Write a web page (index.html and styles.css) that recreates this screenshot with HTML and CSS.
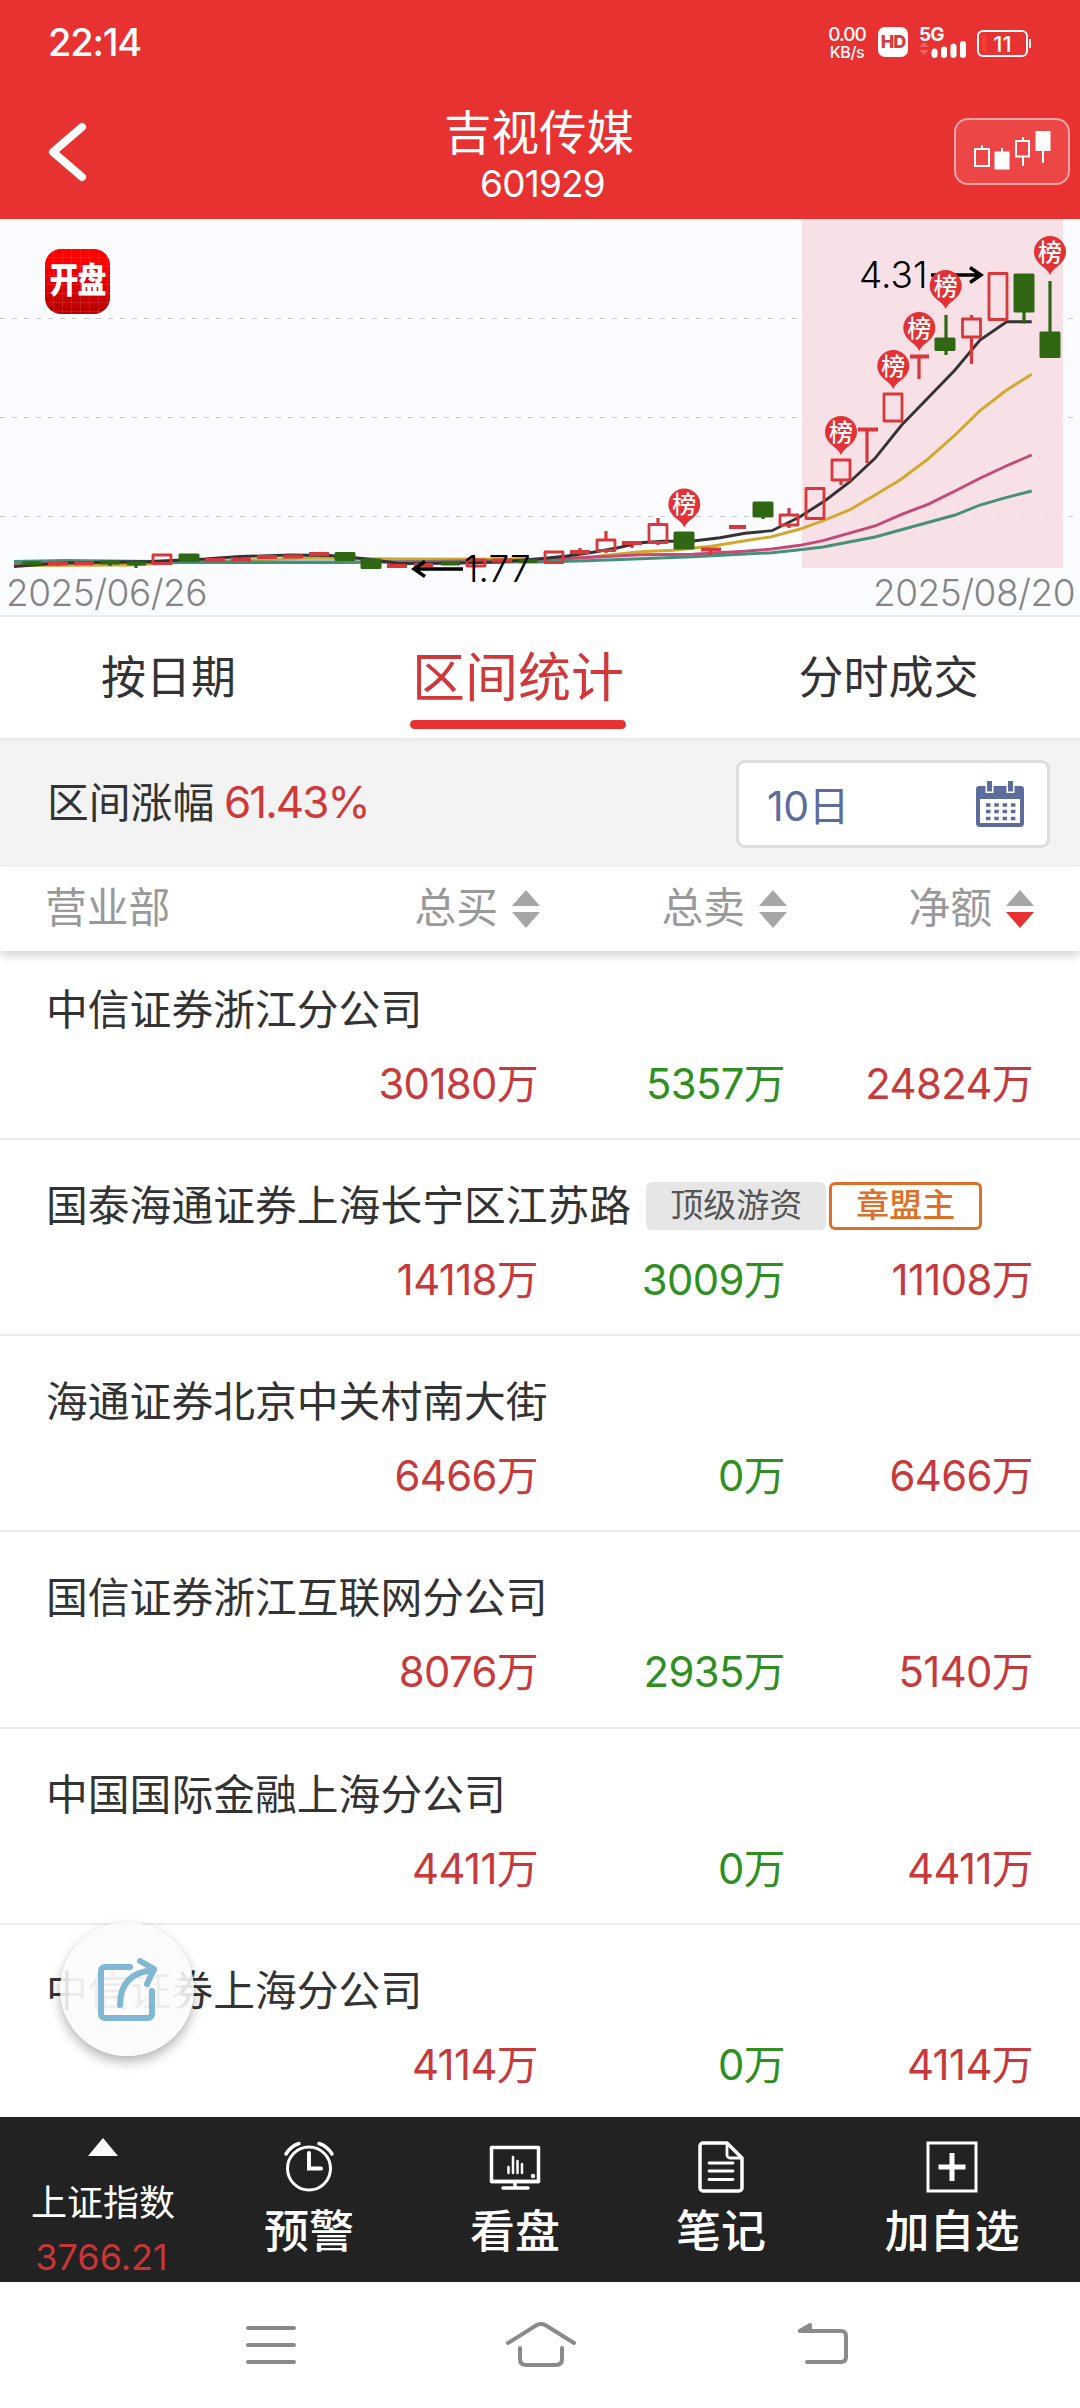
FILE: index.html
```html
<!DOCTYPE html>
<html lang="zh-CN">
<head>
  <meta charset="UTF-8">
  <meta name="viewport" content="width=device-width, initial-scale=1.0">
  <title>吉视传媒 601929</title>
  <link rel="stylesheet" href="styles.css">
</head>
<body>
  <div class="app">
    <header class="header">
      <div class="status-bar">
        <span class="clock">22:14</span>
        <div class="status-right">
          <div class="speed"><span>0.00</span><span>KB/s</span></div>
          <div class="hd">HD</div>
          <div class="signal">
            <span class="net">5G</span>
            <svg width="48" height="17" viewBox="0 0 48 17">
              <path d="M0 6l5-5 5 5zM0 9h10l-5 5z" fill="#f06060"/>
              <path d="M15.500 10.500v3.500M25 8.500v5.500M34.500 5.500v8.500M44 3v11" stroke="#fff" stroke-width="6" stroke-linecap="round"/>
            </svg>
          </div>
          <div class="battery"><span>11</span></div>
        </div>
      </div>
      <div class="title-bar">
        <svg class="back" width="44" height="62" viewBox="0 0 44 62">
          <path d="M37 6L8 31l29 25" fill="none" stroke="#fff" stroke-width="8" stroke-linecap="round" stroke-linejoin="round"/>
        </svg>
        <div class="title">
          <h1>吉视传媒</h1>
          <p>601929</p>
        </div>
        <div class="kline-btn">
          <svg width="80" height="46" viewBox="0 0 80 46">
            <g fill="none" stroke="#fff" stroke-width="2">
              <path d="M9 16v4M2 20h14v17H2zM50 8v4M43 12h13v15.500H43zM50 27.500V37M29 19v4M70 20v14"/>
              <path d="M22.500 23.500h13v16h-13zM63.500 3h13v18h-13z" fill="#fff"/>
            </g>
          </svg>
        </div>
      </div>
    </header>

    <section class="chart">
      <svg class="kline" width="1080" height="397" viewBox="0 219 1080 397">
        <defs>
          <symbol id="pin" viewBox="0 0 34 42" overflow="visible">
            <path d="M17 1a16 16 0 0 1 16 16c0 6-4 11-8.500 14.500C21 34 19 36 17 40c-2-4-4-6-7.500-8.500C5 28 1 23 1 17A16 16 0 0 1 17 1z" fill="#e23236"/>
            <text x="17" y="25.500" class="pin-text">榜</text>
          </symbol>
        </defs>
        <path class="grid" d="M0 318.500h1080M0 417.500h1080M0 516.500h1080"/>
        <rect x="802" y="219" width="261" height="349" fill="#f6dce2" fill-opacity=".88"/>

        <!-- MA5 / MA10 / MA20 / MA30 -->
        <polyline class="ma ma10" points="14,565.5 130,565 190,562 250,560 310,558 350,558.5 400,559 540,559.3 593,556.7 640,551.7 673,550.3 713,546 745,540.7 772,536.7 800,529 825,520 850,509.7 875,495 900,480 926.7,460 955,435 980,410.7 1006.7,390 1031.7,374.3"/>
        <polyline class="ma ma20" points="14,563 130,562.5 340,562.5 540,560 640,554.7 693,554.3 745,551.3 772,549 800,545.3 823,540.7 875,526 901.7,514.3 928,504.3 955,491 980,478.3 1006.7,465.7 1031.7,455"/>
        <polyline class="ma ma30" points="14,561.5 65,560.5 200,562 400,562 540,562 587,560.7 640,558.7 693,556.7 745,554 772,552.7 800,549.7 823,547 875,537 955,515 980,505 1006.7,497.3 1031.7,491"/>
        <polyline class="ma ma5" points="14,566.5 60,563 150,561.5 205,559 240,556.5 290,555 330,555.5 362,558.5 400,563.5 450,563.3 500,562 540,558.7 567,556 593,552.3 617,548 640,542.7 663,541.3 693,541 720,537.7 745,533.3 772,530.7 800,516.7 825,500.7 850,481.7 875,458.3 901.7,425 926.7,399.3 955,370 980,340 1006.7,321.7 1031.7,321.7"/>

        <g class="up">
          <path class="flat" d="M48 563.500h20M74 563.300h20M205 560h20M231 559.500h20M257 557h20M283 556.500h20M309 554h20M387 566h20M414 565h19M492 560.500h20M570 552h20M622 543h20M701 549.500h20M729 527h17M858 429.500h20M910 356.500h19"/>
          <path class="wick" d="M58 561v5M580 548v6.500M606 531v8M606 551v2M632 546v2M658 518v6M658 543v2M710.500 550v5M789 508v6M789 525v3M841 481v4M867 430v33M919 357v22M971.500 315v3M971.500 338v26"/>
          <path class="box" d="M153 555h18v8.500h-18zM467 560h18v6h-18zM545 552h18v10.500h-18zM597 540h18v10.500h-18zM649 524.500h18v18h-18zM780 515h18v10h-18zM806 488.500h18v30h-18zM832 460h18v20h-18zM884 394h18v27h-18zM962.500 319h18v18h-18zM989 273.500h18v46h-18z"/>
        </g>
        <g class="down">
          <path class="flat" d="M22.500 563.200h19M100.500 562.500h19M127 563.500h19M441 563.500h19M518.500 561h19"/>
          <path class="wick" d="M110 562v4M136 563v5M763 516v3M946 315v40M1024 310v13.500M1050 281v55"/>
          <path class="bar" d="M180 555h18v5.500h-18zM336 553.500h18v6h-18zM362 560h18v7.500h-18zM675 533h18v15h-18zM754 503h18v13h-18zM936 339h18v10.500h-18zM1015 275h18v36h-18zM1041 333h18v23.500h-18z"/>
        </g>

        <path class="arrow" d="M931 275h48M970 267.500l11 7.500-11 7.500M463 569h-47M425 561.500l-11 7.500 11 7.500"/>
        <text x="859" y="288" class="mark">4.31</text>
        <text x="464" y="582" class="mark">1.77</text>

        <use href="#pin" x="667.300" y="487.500" width="34" height="42"/>
        <use href="#pin" x="824" y="415" width="34" height="42"/>
        <use href="#pin" x="876.300" y="349" width="34" height="42"/>
        <use href="#pin" x="902.300" y="311" width="34" height="42"/>
        <use href="#pin" x="928.700" y="269" width="34" height="42"/>
        <use href="#pin" x="1033" y="235" width="34" height="42"/>
      </svg>
      <div class="logo"><span>开盘</span></div>
      <span class="date date-start">2025/06/26</span>
      <span class="date date-end">2025/08/20</span>
    </section>

    <nav class="tabs">
      <a class="tab">按日期</a>
      <a class="tab active">区间统计</a>
      <a class="tab">分时成交</a>
    </nav>

    <div class="filter">
      <div class="range">区间涨幅 <span class="rate">61.43%</span></div>
      <div class="select">
        <span>10日</span>
        <svg width="50" height="48" viewBox="0 0 50 48">
          <path d="M4 6h42a3 3 0 0 1 3 3v34a4 4 0 0 1-4 4H5a4 4 0 0 1-4-4V9a3 3 0 0 1 3-3z" fill="#5b6c9d"/>
          <path d="M5 19h40v24H5z" fill="#fff"/>
          <path d="M14.500 0v13M35.500 0v13" stroke="#fff" stroke-width="8"/>
          <path d="M14.500 1v10.500M35.500 1v10.500" stroke="#5b6c9d" stroke-width="5"/>
          <path d="M11 25h30M11 31.500h30M11 38.500h30" stroke="#5b6c9d" stroke-width="3.500" stroke-dasharray="4.500 3.800"/>
        </svg>
      </div>
    </div>

    <div class="table-head">
      <span>营业部</span>
      <span class="sort">总买<i class="arrows"></i></span>
      <span class="sort">总卖<i class="arrows"></i></span>
      <span class="sort desc">净额<i class="arrows"></i></span>
    </div>

    <main class="list">
      <div class="row">
        <div class="name">中信证券浙江分公司</div>
        <div class="values"><span class="red">30180万</span><span class="green">5357万</span><span class="red">24824万</span></div>
      </div>
      <div class="row">
        <div class="name">国泰海通证券上海长宁区江苏路<span class="tag">顶级游资</span><span class="tag orange">章盟主</span></div>
        <div class="values"><span class="red">14118万</span><span class="green">3009万</span><span class="red">11108万</span></div>
      </div>
      <div class="row">
        <div class="name">海通证券北京中关村南大街</div>
        <div class="values"><span class="red">6466万</span><span class="green">0万</span><span class="red">6466万</span></div>
      </div>
      <div class="row">
        <div class="name">国信证券浙江互联网分公司</div>
        <div class="values"><span class="red">8076万</span><span class="green">2935万</span><span class="red">5140万</span></div>
      </div>
      <div class="row">
        <div class="name">中国国际金融上海分公司</div>
        <div class="values"><span class="red">4411万</span><span class="green">0万</span><span class="red">4411万</span></div>
      </div>
      <div class="row">
        <div class="name">中信证券上海分公司</div>
        <div class="values"><span class="red">4114万</span><span class="green">0万</span><span class="red">4114万</span></div>
      </div>
    </main>

    <div class="share">
      <svg width="134" height="134" viewBox="0 0 134 134">
        <path d="M45 19h44l32 32v46l-31 33H42L10 97V50z" fill="#fff" fill-opacity=".4"/>
        <g fill="none" stroke="#82b7d4" stroke-width="6" stroke-linecap="round" stroke-linejoin="round">
          <path d="M70 45H45a4 4 0 0 0-4 4v43a4 4 0 0 0 4 4h43a4 4 0 0 0 4-4V69"/>
          <path d="M60 83c0-21 11-33 34-35M80 39l14 8-7 15"/>
        </g>
      </svg>
    </div>

    <footer class="toolbar">
      <div class="index">
        <i class="up-arrow"></i>
        <span>上证指数</span>
        <b>3766.21</b>
      </div>
      <div class="tool">
        <svg width="52" height="52" viewBox="0 0 52 52" fill="none" stroke="#fff" stroke-width="3" stroke-linecap="round">
          <circle cx="26" cy="27.500" r="21.500"/>
          <path d="M26 12v15.500h12" stroke-width="4"/>
          <path d="M3 13C6 8 10 4.500 16 2.500M49 13C46 8 42 4.500 36 2.500" stroke-width="3.500"/>
        </svg>
        <span>预警</span>
      </div>
      <div class="tool">
        <svg width="52" height="52" viewBox="0 0 52 52" fill="none" stroke="#fff" stroke-width="3.500" stroke-linecap="round">
          <path d="M2.500 6.500h47v34h-47z" stroke-linejoin="round"/>
          <path d="M2.500 40.500h47M26 41v6M14 47h25"/>
          <path d="M19.500 26v6M24 16v16M28.500 20v12M33 23v9" stroke-width="2.500"/>
          <circle cx="44" cy="35" r="1.500" fill="#fff" stroke-width="1.500"/>
        </svg>
        <span>看盘</span>
      </div>
      <div class="tool">
        <svg width="52" height="52" viewBox="0 0 52 52" fill="none" stroke="#fff" stroke-width="3.500" stroke-linecap="round" stroke-linejoin="round">
          <path d="M8 2h24l15 15v30a3 3 0 0 1-3 3H8a3 3 0 0 1-3-3V5a3 3 0 0 1 3-3z"/>
          <path d="M32 3v11a3 3 0 0 0 3 3h11M14 22h24M14 30h24M14 38.500h24" stroke-width="2.800"/>
        </svg>
        <span>笔记</span>
      </div>
      <div class="tool">
        <svg width="52" height="52" viewBox="0 0 52 52" fill="none" stroke="#fff">
          <path d="M2 2h48v48H2z" stroke-width="3"/>
          <path d="M26 12v28M12.500 26h27" stroke-width="5"/>
        </svg>
        <span>加自选</span>
      </div>
    </footer>

    <div class="sys-nav">
      <svg width="52" height="46" viewBox="0 0 52 46">
        <path d="M3 6h46M3 23h46M3 40h46"/>
      </svg>
      <svg class="home" width="74" height="46" viewBox="0 0 74 46">
        <path d="M4 21L32 3.500q5-3 10 0L70 21M16 26v11q0 6 6 6h30q6 0 6-6V26"/>
      </svg>
      <svg width="54" height="46" viewBox="0 0 54 46">
        <path d="M4 9h41q5 0 5 5v21q0 5-5 5H11"/>
        <path d="M4 9l10-6v6z" fill="#8a8a8a"/>
      </svg>
    </div>
  </div>
</body>
</html>
```
FILE: styles.css
```css
* {
  box-sizing: border-box;
}

body {
  margin: 0;
  background: #fff;
  color: #333;
  font-family: Inter, "Noto Sans CJK SC", sans-serif;
  font-size: 41.8px;
}

h1, p {
  margin: 0;
  font-weight: normal;
}

svg {
  display: block;
}

.app {
  position: relative;
  display: flex;
  flex-direction: column;
  width: 1080px;
  height: 2408px;
  overflow: hidden;
}

/* header */
.header {
  height: 219px;
  background: #e83131;
  color: #fff;
}

.status-bar {
  display: flex;
  justify-content: space-between;
  align-items: center;
  height: 84px;
  padding: 0 48px;
}

.clock {
  font-size: 38px;
  font-weight: 500;
  letter-spacing: -1.2px;
}

.status-right {
  display: flex;
  align-items: center;
}

.speed {
  display: flex;
  flex-direction: column;
  align-items: center;
  width: 38px;
  margin-right: 12px;
  font-size: 16px;
  font-weight: 500;
  line-height: 16px;
  letter-spacing: -.4px;
}

.speed span:first-child {
  font-size: 19px;
  line-height: 19px;
  letter-spacing: -1px;
}

.hd {
  width: 30px;
  height: 30px;
  margin-right: 11px;
  border-radius: 7px;
  background: #fff;
  color: #d63a3a;
  font-size: 18px;
  font-weight: 800;
  line-height: 30px;
  text-align: center;
  letter-spacing: -1px;
}

.signal {
  width: 48px;
  height: 32px;
  margin-right: 10px;
}

.net {
  display: block;
  height: 15px;
  font-size: 19px;
  font-weight: 700;
  line-height: 17px;
  letter-spacing: -1px;
}

.battery {
  position: relative;
  width: 51px;
  height: 27px;
  margin-top: 3px;
  margin-right: 4px;
  border: 2px solid #fff;
  border-radius: 6px;
  font-size: 22px;
  font-weight: 500;
  line-height: 24px;
  text-align: center;
}

.battery::before {
  content: "";
  position: absolute;
  left: 3px;
  top: 3px;
  width: 4px;
  height: 17px;
  background: #ff3b30;
}

.battery::after {
  content: "";
  position: absolute;
  right: -5px;
  top: 7px;
  width: 2px;
  height: 9px;
  background: #fff;
}

.title-bar {
  display: grid;
  grid-template-columns: 135px 1fr 135px;
  height: 135px;
  padding: 0 10px 0 0;
}

.back {
  margin: 37px 0 0 45px;
}

.title {
  padding: 23px 0 0 8px;
  text-align: center;
}

.title h1 {
  font-size: 47.5px;
  line-height: 52px;
}

.title p {
  padding-left: 7px;
  font-size: 37px;
  line-height: 50px;
  letter-spacing: -.8px;
}

.kline-btn {
  justify-self: end;
  width: 116px;
  height: 67px;
  margin-top: 34px;
  padding: 9px 0 0 17px;
  border: 2px solid #f7a5a5;
  border-radius: 14px;
  background: #ec4646;
}

/* chart */
.chart {
  position: relative;
  height: 398px;
  border-bottom: 2px solid #ebebeb;
  background: #fbfcff;
}

.grid {
  stroke: #c9cbd2;
  stroke-width: 1;
  stroke-dasharray: 5 7;
}

.ma {
  fill: none;
  stroke-width: 2.9;
}

.ma5 { stroke: #333; }
.ma10 { stroke: #d2a82b; }
.ma20 { stroke: #c44878; }
.ma30 { stroke: #469079; }

.up path {
  fill: none;
  stroke: #d8383b;
}

.down path {
  fill: none;
  stroke: #2f6713;
}

.up .flat, .down .flat {
  stroke-width: 4;
}

.up .wick, .down .wick {
  stroke-width: 3.2;
}

.up .box {
  stroke-width: 2.8;
  stroke-linejoin: round;
}

.down .bar {
  fill: #2f6713;
  stroke-width: 3;
  stroke-linejoin: round;
}

.arrow {
  fill: none;
  stroke: #000;
  stroke-width: 3.4;
}

.mark {
  fill: #000;
  font-size: 37px;
  font-weight: 350;
}

.pin-text {
  fill: #fff;
  font-size: 24px;
  font-weight: 500;
  text-anchor: middle;
}

.logo {
  position: absolute;
  left: 45px;
  top: 30px;
  width: 65px;
  height: 65px;
  border-radius: 16px;
  background:
    repeating-linear-gradient(90deg, transparent 0 8px, rgba(255, 255, 255, .1) 8px 9px),
    repeating-linear-gradient(transparent 0 8px, rgba(255, 255, 255, .1) 8px 9px),
    linear-gradient(#f00 20%, #b30000);
  color: #fff;
  font-size: 29px;
  font-weight: 900;
  line-height: 64px;
  text-align: center;
  letter-spacing: -1px;
}

.logo span {
  display: block;
  transform: scaleY(1.22);
}

.date {
  position: absolute;
  top: 351px;
  color: #858585;
  font-size: 37px;
  font-weight: 350;
  line-height: 46px;
  letter-spacing: -.5px;
}

.date-start { left: 6px; }
.date-end { right: 5px; }

/* tabs */
.tabs {
  display: grid;
  grid-template-columns: 337px 362px 379px;
  height: 121px;
}

.tab {
  justify-self: center;
  padding-top: 2px;
  font-size: 45px;
  line-height: 118px;
}

.tab.active {
  position: relative;
  width: 216px;
  color: #d0383a;
  font-size: 53px;
  text-align: center;
}

.tab.active::after {
  content: "";
  position: absolute;
  left: 0;
  bottom: 9px;
  width: 216px;
  height: 9px;
  border-radius: 5px;
  background: #e83131;
}

.filter {
  display: flex;
  justify-content: space-between;
  align-items: center;
  height: 129px;
  padding: 0 30px 0 47px;
  border-top: 3px solid #ebebeb;
  background: #f3f3f3;
}

.range {
  padding-bottom: 8px;
}

.rate {
  margin-left: -2px;
  color: #d0383a;
  font-size: 44px;
  letter-spacing: -2px;
}

.select {
  display: flex;
  justify-content: space-between;
  align-items: center;
  width: 314px;
  height: 88px;
  padding: 0 22px 0 28px;
  border: 3px solid #ddd;
  border-radius: 9px;
  background: #fff;
  color: #5b6c9d;
  font-size: 41px;
  letter-spacing: -.5px;
}

.select span {
  padding-bottom: 2px;
}

/* table */
.table-head {
  position: relative;
  z-index: 1;
  display: grid;
  grid-template-columns: 292px 248px 247px 247px;
  align-items: center;
  height: 84px;
  padding-bottom: 3px;
  background: #fff;
  color: #999;
  line-height: 60px;
  box-shadow: 0 5px 9px rgba(0, 0, 0, .16);
}

.table-head > span:first-child {
  padding-left: 45px;
}

.sort {
  display: flex;
  justify-content: flex-end;
  align-items: center;
  gap: 14px;
}

.arrows {
  display: grid;
  gap: 6px;
  margin-top: 3px;
}

.arrows::before, .arrows::after {
  content: "";
  border: 14px solid transparent;
}

.arrows::before {
  border-top: 0;
  border-bottom: 16px solid #a6a6a6;
}

.arrows::after {
  border-bottom: 0;
  border-top: 16px solid #a6a6a6;
}

.desc .arrows::after {
  border-top-color: #e83131;
}

.list {
  flex: 1;
  overflow: hidden;
}

.row {
  height: 196.2px;
  padding-top: 37px;
  border-bottom: 2px solid #ebebeb;
}

.row:first-child {
  height: 189px;
  padding-top: 30px;
}

.name {
  display: flex;
  align-items: center;
  height: 52px;
  padding-left: 46px;
}

.tag {
  height: 48px;
  margin-top: 6px;
  margin-left: 15px;
  padding: 0 24px;
  border-radius: 6px;
  background: #e6e6e6;
  color: #555;
  font-size: 33px;
  line-height: 47px;
}

.tag.orange {
  margin-left: 3px;
  border: 3px solid #dd7026;
  background: #fff;
  color: #dd7026;
  font-weight: 500;
  line-height: 41px;
}

.values {
  display: grid;
  grid-template-columns: 538px 247px 248px;
  margin-top: 21px;
  line-height: 60px;
  text-align: right;
  letter-spacing: -.6px;
}

.red { color: #c73a3c; }
.green { color: #2f8f1f; }

.share {
  position: absolute;
  left: 60px;
  top: 1922px;
  width: 134px;
  height: 134px;
  border-radius: 50%;
  background: rgba(251, 251, 251, .88);
  box-shadow: 0 6px 12px rgba(0, 0, 0, .28), 0 0 2px rgba(0, 0, 0, .1);
}

/* bottom bars */
.toolbar {
  display: grid;
  grid-template-columns: repeat(4, 206px) 256px;
  height: 165px;
  background: #222;
  color: #fff;
}

.index {
  display: flex;
  flex-direction: column;
  align-items: center;
  padding-top: 21px;
  font-size: 36px;
  line-height: 50px;
}

.index span {
  margin-top: 22px;
}

.index b {
  margin-top: 4px;
  padding-right: 3px;
  color: #c93436;
  font-weight: 400;
  letter-spacing: 0;
}

.up-arrow {
  border: 15px solid transparent;
  border-top: 0;
  border-bottom: 18px solid #fff;
}

.tool {
  display: flex;
  flex-direction: column;
  align-items: center;
  padding-top: 24px;
  font-size: 45px;
  font-weight: 500;
  line-height: 60px;
}

.tool span {
  margin-top: 9px;
}

.sys-nav {
  display: flex;
  align-items: flex-start;
  height: 126px;
  padding: 40px 0 0 245px;
}

.home {
  margin: 0 218px 0 207px;
}

.sys-nav path {
  fill: none;
  stroke: #8a8a8a;
  stroke-width: 4;
  stroke-linecap: round;
  stroke-linejoin: round;
}
```
